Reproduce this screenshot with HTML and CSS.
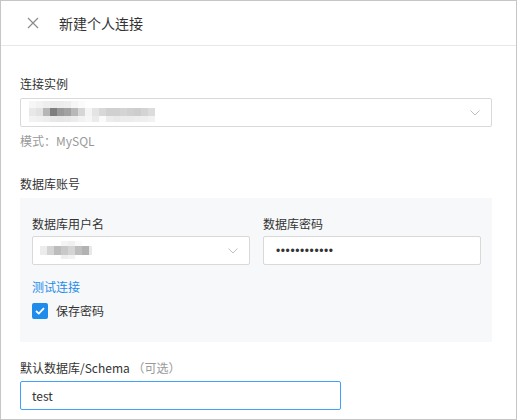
FILE: index.html
```html
<!DOCTYPE html>
<html lang="zh-CN">
<head>
<meta charset="utf-8">
<title>新建个人连接</title>
<link rel="stylesheet" href="styles.css">
</head>
<body>
<div class="frame">
  <header class="header">
    <svg class="close" width="12" height="12" viewBox="0 0 12 12"><path d="M1 1L11 11M11 1L1 11" stroke="#8c8c8c" stroke-width="1.2" fill="none"/></svg>
    <span class="title">新建个人连接</span>
  </header>
  <main class="body">
    <div class="label first">连接实例</div>
    <div class="select main-select">
      <div class="blur blur-main">
        <div class="br br-a"></div>
        <div class="br br-b"></div>
        <div class="br br-c"></div>
      </div>
      <svg class="chev" width="10" height="6" viewBox="0 0 10 6"><path d="M0.5 0.5L5 5L9.5 0.5" stroke="#bfbfbf" stroke-width="1" fill="none"/></svg>
    </div>
    <div class="hint">模式：MySQL</div>

    <div class="label section">数据库账号</div>
    <div class="panel">
      <div class="cols">
        <div class="col">
          <div class="label">数据库用户名</div>
          <div class="select">
            <div class="blur blur-user">
              <div class="br bu-a"></div>
              <div class="br bu-b"></div>
              <div class="br bu-c"></div>
            </div>
            <svg class="chev" width="10" height="6" viewBox="0 0 10 6"><path d="M0.5 0.5L5 5L9.5 0.5" stroke="#bfbfbf" stroke-width="1" fill="none"/></svg>
          </div>
        </div>
        <div class="col">
          <div class="label">数据库密码</div>
          <div class="input pwd">••••••••••••</div>
        </div>
      </div>
      <a class="link">测试连接</a>
      <label class="check">
        <span class="box"><svg width="10" height="8" viewBox="0 0 10 8"><path d="M1 4L3.8 6.6L9 1.2" stroke="#fff" stroke-width="1.8" fill="none"/></svg></span>
        <span>保存密码</span>
      </label>
    </div>

    <div class="label schema">默认数据库/Schema <span class="opt">（可选）</span></div>
    <div class="input focus">test</div>
  </main>
</div>
</body>
</html>
```
FILE: styles.css
```css
* { box-sizing: border-box; }
html, body { margin: 0; padding: 0; background: #fff; }
body {
  font-family: "Noto Sans CJK SC", "Noto Sans", sans-serif;
  font-size: 12px;
  color: #333;
}
.frame {
  width: 517px;
  height: 420px;
  border: 1px solid #c6c6c6;
  overflow: hidden;
}
.header {
  height: 45px;
  border-bottom: 1px solid #e8e8e8;
  display: flex;
  align-items: center;
  padding-left: 26px;
}
.close { display: block; margin-top: 0; }
.title {
  margin-left: 20px;
  font-size: 14px;
  color: #333;
  line-height: 20px;
}
.body {
  padding: 0 24px 0 19px;
}
.label {
  line-height: 18px;
  height: 18px;
  color: #333;
}
.label.first { margin-top: 29px; }
.select, .input {
  height: 29px;
  border: 1px solid #d9d9d9;
  border-radius: 2px;
  background: #fff;
  display: flex;
  align-items: center;
  position: relative;
}
.main-select { margin-top: 5px; }
.chev { position: absolute; right: 11px; top: 11px; }
.hint {
  margin-top: 5px;
  line-height: 18px;
  color: #999;
}
.label.section { margin-top: 25px; }
.panel {
  margin-top: 5px;
  background: #f7f8fa;
  padding: 17px 11px 22px 12px;
  height: 144px;
}
.cols { display: flex; gap: 13px; }
.col { flex: 1; }
.col .select, .col .input { margin-top: 3px; }
.pwd {
  padding-left: 12px;
  font-family: "Liberation Sans", Arial, sans-serif;
  font-size: 12px;
  letter-spacing: 0.6px;
  color: #333;
}
.link {
  display: block;
  margin-top: 13px;
  line-height: 18px;
  color: #1f8ceb;
}
.check {
  margin-top: 6px;
  display: flex;
  align-items: center;
  height: 18px;
  line-height: 18px;
}
.box {
  width: 16px;
  height: 16px;
  border-radius: 2px;
  background: #1f8ceb;
  display: flex;
  align-items: center;
  justify-content: center;
  margin-right: 8px;
}
.box svg { display: block; }
.label.schema { margin-top: 17px; }
.opt { color: #999; }
.input.focus {
  margin-top: 4px;
  width: 321px;
  border-color: #40a0ff;
  padding-left: 11px;
  font-size: 12px;
  color: #333;
}
.blur { position: absolute; left: 8px; }
.blur-main { top: 2px; }
.br { height: 7px; }
.br-a {
  width: 56px;
  background: linear-gradient(to right, #f6f6f6 0 7px, #f2f2f2 7px 14px, #eeeeee 14px 21px, #ebebeb 21px 28px, #ececec 28px 35px, #eeeeee 35px 42px, #f6f6f6 42px 49px, #fbfbfb 49px 56px);
}
.br-b {
  width: 126px;
  height: 8px;
  background: linear-gradient(to right, #e8e8e8 0 7px, #e2e2e2 7px 14px, #b6b6b6 14px 21px, #7e7e7e 21px 28px, #999 28px 35px, #a2a2a2 35px 42px, #b8b8b8 42px 49px, #d6d6d6 49px 56px, #f4f4f4 56px 63px, #e4e4e4 63px 70px, #d8d8d8 70px 77px, #d0d0d0 77px 84px, #d0d0d0 84px 91px, #d4d4d4 91px 98px, #d0d0d0 98px 105px, #cdcdcd 105px 112px, #d4d4d4 112px 119px, #dcdcdc 119px 126px);
}
.br-c {
  width: 126px;
  height: 6px;
  background: linear-gradient(to right, #f2f2f2 0 7px, #f0f0f0 7px 14px, #ededed 14px 21px, #e8e8e8 21px 28px, #e6e6e6 28px 35px, #e8e8e8 35px 42px, #ececec 42px 49px, #f2f2f2 49px 56px, #f6f6f6 56px 63px, #ebebeb 63px 70px, #fafafa 70px 77px, #ececec 77px 84px, #e9e9e9 84px 91px, #ececec 91px 98px, #ececec 98px 105px, #eeeeee 105px 112px, #efefef 112px 119px, #f2f2f2 119px 126px);
}
.blur-user { top: 4px; left: 7px; }
.bu-a {
  width: 52px;
  height: 5px;
  background: linear-gradient(to right, #fff 0 21px, #f4f4f4 21px 28px, #f0f0f0 28px 35px, #fafafa 35px 42px, #fff 42px 52px);
}
.bu-b {
  width: 52px;
  height: 9px;
  background: linear-gradient(to right, #ececec 0 7px, #d4d4d4 7px 14px, #bcbcbc 14px 21px, #c8c8c8 21px 28px, #d4d4d4 28px 35px, #bebebe 35px 42px, #b2b2b2 42px 49px, #e8e8e8 49px 52px);
}
.bu-c {
  width: 52px;
  height: 4px;
  background: linear-gradient(to right, #fff 0 21px, #eeeeee 21px 28px, #f2f2f2 28px 35px, #fff 35px 52px);
}
```
